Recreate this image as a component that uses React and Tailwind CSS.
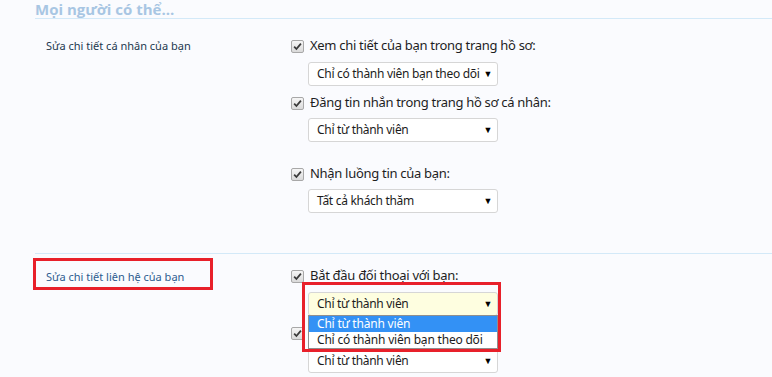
import React from 'react';

const Check = ({ className = '' }) => (
  <span
    className={`inline-flex h-[13px] w-[13px] shrink-0 items-center justify-center rounded-[2px] border border-[#a8a8a8] bg-gradient-to-b from-[#f6f6f6] to-[#dadada] ${className}`}
  >
    <svg viewBox="0 0 10 10" className="h-[9px] w-[9px]">
      <path d="M1.3 5.2 L3.8 7.8 L8.8 1.8" fill="none" stroke="#3a3a3a" strokeWidth="2" />
    </svg>
  </span>
);

const Select = ({ value, focused = false }) => (
  <div
    className={`flex h-[24px] w-[190px] items-center justify-between rounded-[3px] border border-[#d6d6d6] pl-[8px] pr-[5px] text-[12px] tracking-[-0.3px] text-[#1c1c1c] ${
      focused ? 'bg-[#fefee0]' : 'bg-white'
    }`}
  >
    <span>{value}</span>
    <span className="text-[9px] text-black">▼</span>
  </div>
);

const Option = ({ label, value, focused, top = 'mt-[5px]' }) => (
  <div className="flex flex-col">
    <div className="flex h-[20px] items-center gap-[6px] text-[13px] tracking-[-0.3px] text-[#1e1e1e]">
      <Check />
      <span>{label}</span>
    </div>
    <div className={`${top} pl-[17px]`}>
      <Select value={value} focused={focused} />
    </div>
  </div>
);

export default function App() {
  return (
    <div
      className="relative h-[377px] w-[772px] overflow-hidden bg-[#fafbfe]"
      style={{ fontFamily: '"Noto Sans", "Open Sans", sans-serif' }}
    >
      <div className="pl-[35px]">
        <h2
          className="h-[19px] border-b border-[#d3e9f8] pt-[1px] text-[15px] font-bold leading-[16px] text-[#a8c6e3]"
          style={{ fontFamily: '"Open Sans", sans-serif' }}
        >
          Mọi người có thể...
        </h2>

        {/* Section 1 */}
        <div className="flex h-[235px] border-b border-[#d3e9f8] pt-[17px]">
          <div className="w-[256px] pl-[11px]">
            <div className="flex h-[20px] items-center text-[11px] text-[#22384f]">
              Sửa chi tiết cá nhân của bạn
            </div>
          </div>
          <div className="flex flex-col">
            <Option label="Xem chi tiết của bạn trong trang hồ sơ:" value="Chỉ có thành viên bạn theo dõi" top="mt-[6px]" />
            <div className="mt-[7px]">
              <Option label="Đăng tin nhắn trong trang hồ sơ cá nhân:" value="Chỉ từ thành viên" />
            </div>
            <div className="mt-[22px]">
              <Option label="Nhận luồng tin của bạn:" value="Tất cả khách thăm" />
            </div>
          </div>
        </div>

        {/* Section 2 */}
        <div className="flex pt-[12px]">
          <div className="w-[256px] pl-[11px] pt-[1px]">
            <div className="flex h-[20px] items-center text-[11px] text-[#2d5c8f]">
              Sửa chi tiết liên hệ của bạn
            </div>
          </div>
          <div className="flex flex-col">
            <Option label="Bắt đầu đối thoại với bạn:" value="Chỉ từ thành viên" focused top="mt-[6px]" />
            <div className="mt-[7px]">
              <Option label="Xem thông tin liên hệ của bạn:" value="Chỉ từ thành viên" top="mt-[6px]" />
            </div>
          </div>
        </div>
      </div>

      {/* open dropdown list */}
      <div className="absolute left-[308px] top-[315px] w-[190px] border border-[#8f8f8f] bg-white text-[12px] tracking-[-0.2px] text-[#1c1c1c]">
        <div className="flex h-[16px] items-center bg-[#3391f5] pl-[8px] text-white">Chỉ từ thành viên</div>
        <div className="flex h-[16px] items-center pl-[8px]">Chỉ có thành viên bạn theo dõi</div>
      </div>

      {/* annotation boxes */}
      <div className="pointer-events-none absolute left-[33px] top-[258px] h-[32px] w-[180px] border-[3px] border-[#e8202a]" />
      <div className="pointer-events-none absolute left-[302px] top-[282px] h-[70px] w-[199px] border-[3px] border-[#e8202a]" />
    </div>
  );
}
